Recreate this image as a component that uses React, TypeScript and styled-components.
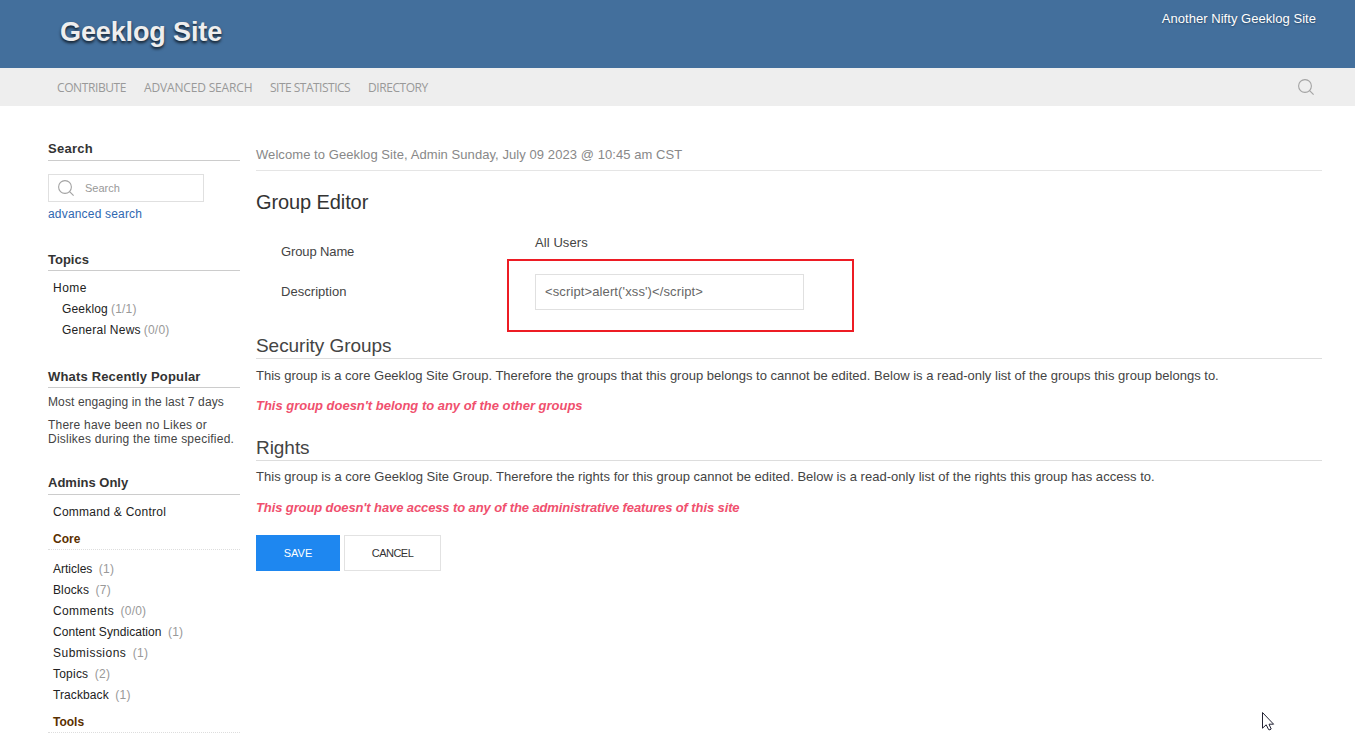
import React from "react";
import styled, { createGlobalStyle } from "styled-components";

const GlobalStyle = createGlobalStyle`
  * { box-sizing: border-box; }
  body {
    margin: 0;
    background: #fff;
    color: #444;
    font-family: "Liberation Sans", Arial, sans-serif;
    font-size: 13px;
    overflow: hidden;
  }
  h1, h2, h3, p, ul { margin: 0; padding: 0; }
  a { color: inherit; text-decoration: none; }
`;

type Track = { $track?: number };

const Page = styled.div`
  position: relative;
  height: 745px;
  overflow: hidden;
`;

const Header = styled.header`
  height: 68px;
  display: flex;
  justify-content: space-between;
  align-items: flex-start;
  padding: 0 39px 0 60px;
  background: #436f9c;
`;

const SiteName = styled.a`
  margin-top: 14px;
  color: #eee;
  font-size: 27px;
  font-weight: bold;
  line-height: 36px;
  letter-spacing: -0.12px;
  text-shadow: 0 2px 3px rgba(0, 0, 0, 0.75);
`;

const Slogan = styled.span`
  margin-top: 9px;
  color: #fff;
  line-height: 20px;
  letter-spacing: 0.04px;
  text-shadow: 0 1px 2px rgba(0, 0, 0, 0.35);
`;

const NavBar = styled.nav`
  height: 38px;
  display: flex;
  align-items: center;
  justify-content: space-between;
  padding: 0 41px 0 57px;
  background: #eee;
`;

const NavList = styled.div`
  display: flex;
  padding-top: 2px;
`;

const NavLink = styled.a<Track & { $width: number }>`
  width: ${(p) => p.$width}px;
  color: #999;
  font-family: "Open Sans", "Noto Sans", sans-serif;
  font-size: 12px;
  line-height: 20px;
  letter-spacing: ${(p) => p.$track ?? 0}px;
  white-space: nowrap;
`;

const Columns = styled.div`
  display: flex;
  gap: 16px;
  padding: 0 33px 0 48px;
`;

const Sidebar = styled.aside`
  width: 192px;
  flex: none;
  padding-top: 33px;
`;

const Block = styled.section<{ $gap: number }>`
  margin-bottom: ${(p) => p.$gap}px;
`;

const BlockTitle = styled.h3<Track & { $low?: boolean }>`
  height: 22px;
  border-bottom: 1px solid #ccc;
  color: #333;
  font-size: 13px;
  font-weight: bold;
  line-height: ${(p) => (p.$low ? 22 : 20)}px;
  letter-spacing: ${(p) => p.$track ?? 0}px;
`;

const SearchField = styled.label`
  display: flex;
  align-items: center;
  width: 156px;
  height: 28px;
  margin-top: 13px;
  padding-left: 9px;
  gap: 11px;
  border: 1px solid #e0e0e0;
`;

const SearchInput = styled.input`
  width: 100px;
  padding: 0;
  border: 0;
  outline: 0;
  background: none;
  font: 11px "Liberation Sans", Arial, sans-serif;
  &::placeholder { color: #999; opacity: 1; }
`;

const AdvancedLink = styled.a`
  display: block;
  margin-top: 3px;
  color: #2f68b1;
  font-size: 12px;
  line-height: 18px;
  letter-spacing: 0.18px;
`;

const LinkList = styled.ul<{ $top: number }>`
  margin-top: ${(p) => p.$top}px;
  list-style: none;
`;

const LinkItem = styled.li<Track & { $indent?: boolean; $gap?: number }>`
  display: flex;
  gap: ${(p) => p.$gap ?? 6.5}px;
  padding-left: ${(p) => (p.$indent ? 14 : 5)}px;
  color: #222;
  font-size: 12px;
  line-height: 21px;
  letter-spacing: ${(p) => p.$track ?? 0}px;
`;

const Count = styled.span`
  color: #999;
  letter-spacing: 0.2px;
`;

const SubTitle = styled.div<{ $top: number }>`
  height: 21px;
  margin-top: ${(p) => p.$top}px;
  padding-left: 5px;
  border-bottom: 1px dotted #ddd;
  color: #5b3000;
  font-size: 12px;
  font-weight: bold;
  line-height: 20px;
`;

const Note = styled.p<Track & { $top: number }>`
  margin-top: ${(p) => p.$top}px;
  font-size: 12px;
  line-height: 14px;
  letter-spacing: ${(p) => p.$track ?? 0}px;
  white-space: nowrap;
`;

const Main = styled.main`
  flex: 1;
  padding-top: 39px;
`;

const Welcome = styled.p`
  height: 26px;
  border-bottom: 1px solid #e5e5e5;
  color: #888;
  line-height: 20px;
  letter-spacing: 0.07px;
`;

const PageTitle = styled.h1`
  margin-top: 19px;
  color: #333;
  font-size: 20px;
  font-weight: normal;
  line-height: 24px;
  letter-spacing: -0.1px;
`;

const Form = styled.div`
  display: grid;
  grid-template-columns: 254px 319px;
  grid-template-rows: 40px 40px;
  margin: 18px 0 22px 25px;
`;

const FieldLabel = styled.label<Track>`
  align-self: center;
  line-height: 20px;
  letter-spacing: ${(p) => p.$track ?? 0}px;
`;

const FieldValue = styled.span`
  align-self: start;
  padding-top: 1px;
  line-height: 20px;
  letter-spacing: 0.08px;
`;

const DescriptionCell = styled.div`
  position: relative;
  display: flex;
  align-items: center;
`;

const Highlight = styled.div`
  position: absolute;
  inset: -13px 0 -20px -28px;
  border: 2px solid #ed1c24;
  pointer-events: none;
`;

const TextInput = styled.input`
  width: 269px;
  height: 36px;
  padding: 0 9px 2px;
  border: 1px solid #e0e0e0;
  color: #666;
  font: 13px "Liberation Sans", Arial, sans-serif;
  letter-spacing: 0.12px;
`;

const SectionTitle = styled.h2<{ $top: number }>`
  height: 25px;
  margin-top: ${(p) => p.$top}px;
  border-bottom: 1px solid #ddd;
  color: #444;
  font-size: 19px;
  font-weight: normal;
  line-height: 23px;
  letter-spacing: -0.05px;
`;

const Paragraph = styled.p<Track & { $top: number }>`
  margin-top: ${(p) => p.$top}px;
  line-height: 20px;
  letter-spacing: ${(p) => p.$track ?? 0}px;
  white-space: nowrap;
`;

const Warning = styled(Paragraph)`
  color: #f0506e;
  font-weight: bold;
  font-style: italic;
`;

const Actions = styled.div`
  display: flex;
  gap: 4px;
  margin-top: 17px;
`;

const Button = styled.button<Track & { $primary?: boolean }>`
  width: ${(p) => (p.$primary ? 84 : 97)}px;
  height: 36px;
  padding: 0;
  border: 1px solid ${(p) => (p.$primary ? "#1e87f0" : "#e2e2e2")};
  background: ${(p) => (p.$primary ? "#1e87f0" : "#fff")};
  color: ${(p) => (p.$primary ? "#fff" : "#333")};
  font: 11px "Liberation Sans", Arial, sans-serif;
  letter-spacing: ${(p) => p.$track ?? 0}px;
`;

const Pointer = styled.svg`
  position: absolute;
  left: 1261px;
  top: 711px;
`;

const SearchIcon = () => (
  <svg width="16" height="16" viewBox="0 0 16 16" fill="none" stroke="#a3a3a3">
    <circle cx="7" cy="7" r="6.4" strokeWidth="1.1" />
    <path d="M11.6 11.6L15.6 15.6" strokeWidth="1.1" />
  </svg>
);

const navItems = [
  { label: "CONTRIBUTE", width: 87, track: -0.4 },
  { label: "ADVANCED SEARCH", width: 126, track: -0.16 },
  { label: "SITE STATISTICS", width: 98, track: -0.51 },
  { label: "DIRECTORY", width: 61, track: -0.43 },
];

const coreItems = [
  { label: "Articles", count: "(1)", track: 0 },
  { label: "Blocks", count: "(7)", track: 0.12 },
  { label: "Comments", count: "(0/0)", track: 0.38 },
  { label: "Content Syndication", count: "(1)", track: 0.06 },
  { label: "Submissions", count: "(1)", track: 0.48 },
  { label: "Topics", count: "(2)", track: 0.22 },
  { label: "Trackback", count: "(1)", track: 0.1 },
];

export default function App() {
  return (
    <Page>
      <GlobalStyle />
      <Header>
        <SiteName href="#">Geeklog Site</SiteName>
        <Slogan>Another Nifty Geeklog Site</Slogan>
      </Header>
      <NavBar>
        <NavList>
          {navItems.map((n) => (
            <NavLink key={n.label} href="#" $width={n.width} $track={n.track}>
              {n.label}
            </NavLink>
          ))}
        </NavList>
        <SearchIcon />
      </NavBar>
      <Columns>
        <Sidebar>
          <Block $gap={26}>
            <BlockTitle $track={0.27}>Search</BlockTitle>
            <SearchField>
              <SearchIcon />
              <SearchInput placeholder="Search" />
            </SearchField>
            <AdvancedLink href="#">advanced search</AdvancedLink>
          </Block>
          <Block $gap={25}>
            <BlockTitle $low>Topics</BlockTitle>
            <LinkList $top={7}>
              <LinkItem $track={0.5}>Home</LinkItem>
              <LinkItem $indent $gap={3} $track={0.18}>
                Geeklog <Count>(1/1)</Count>
              </LinkItem>
              <LinkItem $indent $gap={3} $track={0.23}>
                General News <Count>(0/0)</Count>
              </LinkItem>
            </LinkList>
          </Block>
          <Block $gap={27}>
            <BlockTitle $low $track={0.17}>Whats Recently Popular</BlockTitle>
            <Note $top={7} $track={0.12}>Most engaging in the last 7 days</Note>
            <Note $top={9} $track={0.23}>
              There have been no Likes or
              <br />
              Dislikes during the time specified.
            </Note>
          </Block>
          <Block $gap={0}>
            <BlockTitle>Admins Only</BlockTitle>
            <LinkList $top={7}>
              <LinkItem $track={0.26}>Command &amp; Control</LinkItem>
            </LinkList>
            <SubTitle $top={6}>Core</SubTitle>
            <LinkList $top={9}>
              {coreItems.map((i) => (
                <LinkItem key={i.label} $track={i.track}>
                  {i.label} <Count>{i.count}</Count>
                </LinkItem>
              ))}
            </LinkList>
            <SubTitle $top={6}>Tools</SubTitle>
          </Block>
        </Sidebar>
        <Main>
          <Welcome>Welcome to Geeklog Site, Admin Sunday, July 09 2023 @ 10:45 am CST</Welcome>
          <PageTitle>Group Editor</PageTitle>
          <Form>
            <FieldLabel $track={-0.12}>Group Name</FieldLabel>
            <FieldValue>All Users</FieldValue>
            <FieldLabel $track={0.04}>Description</FieldLabel>
            <DescriptionCell>
              <TextInput defaultValue="<script>alert('xss')</script>" />
              <Highlight />
            </DescriptionCell>
          </Form>
          <SectionTitle $top={0}>Security Groups</SectionTitle>
          <Paragraph $top={7} $track={0.011}>
            This group is a core Geeklog Site Group. Therefore the groups that this group belongs to cannot be edited.
            Below is a read-only list of the groups this group belongs to.
          </Paragraph>
          <Warning $top={10} $track={-0.016}>This group doesn't belong to any of the other groups</Warning>
          <SectionTitle $top={20}>Rights</SectionTitle>
          <Paragraph $top={6} $track={0.027}>
            This group is a core Geeklog Site Group. Therefore the rights for this group cannot be edited. Below is a
            read-only list of the rights this group has access to.
          </Paragraph>
          <Warning $top={11} $track={-0.107}>
            This group doesn't have access to any of the administrative features of this site
          </Warning>
          <Actions>
            <Button $primary>SAVE</Button>
            <Button $track={-0.5}>CANCEL</Button>
          </Actions>
        </Main>
      </Columns>
      <Pointer width="14" height="20" viewBox="0 0 14 20">
        <path
          d="M1.5 1.5V17.2L5.2 13.8L7.6 18.6Q9 19.3 10.2 18L8 13.2H12.6Z"
          fill="#fff"
          stroke="#223"
          strokeWidth="1"
        />
      </Pointer>
    </Page>
  );
}
